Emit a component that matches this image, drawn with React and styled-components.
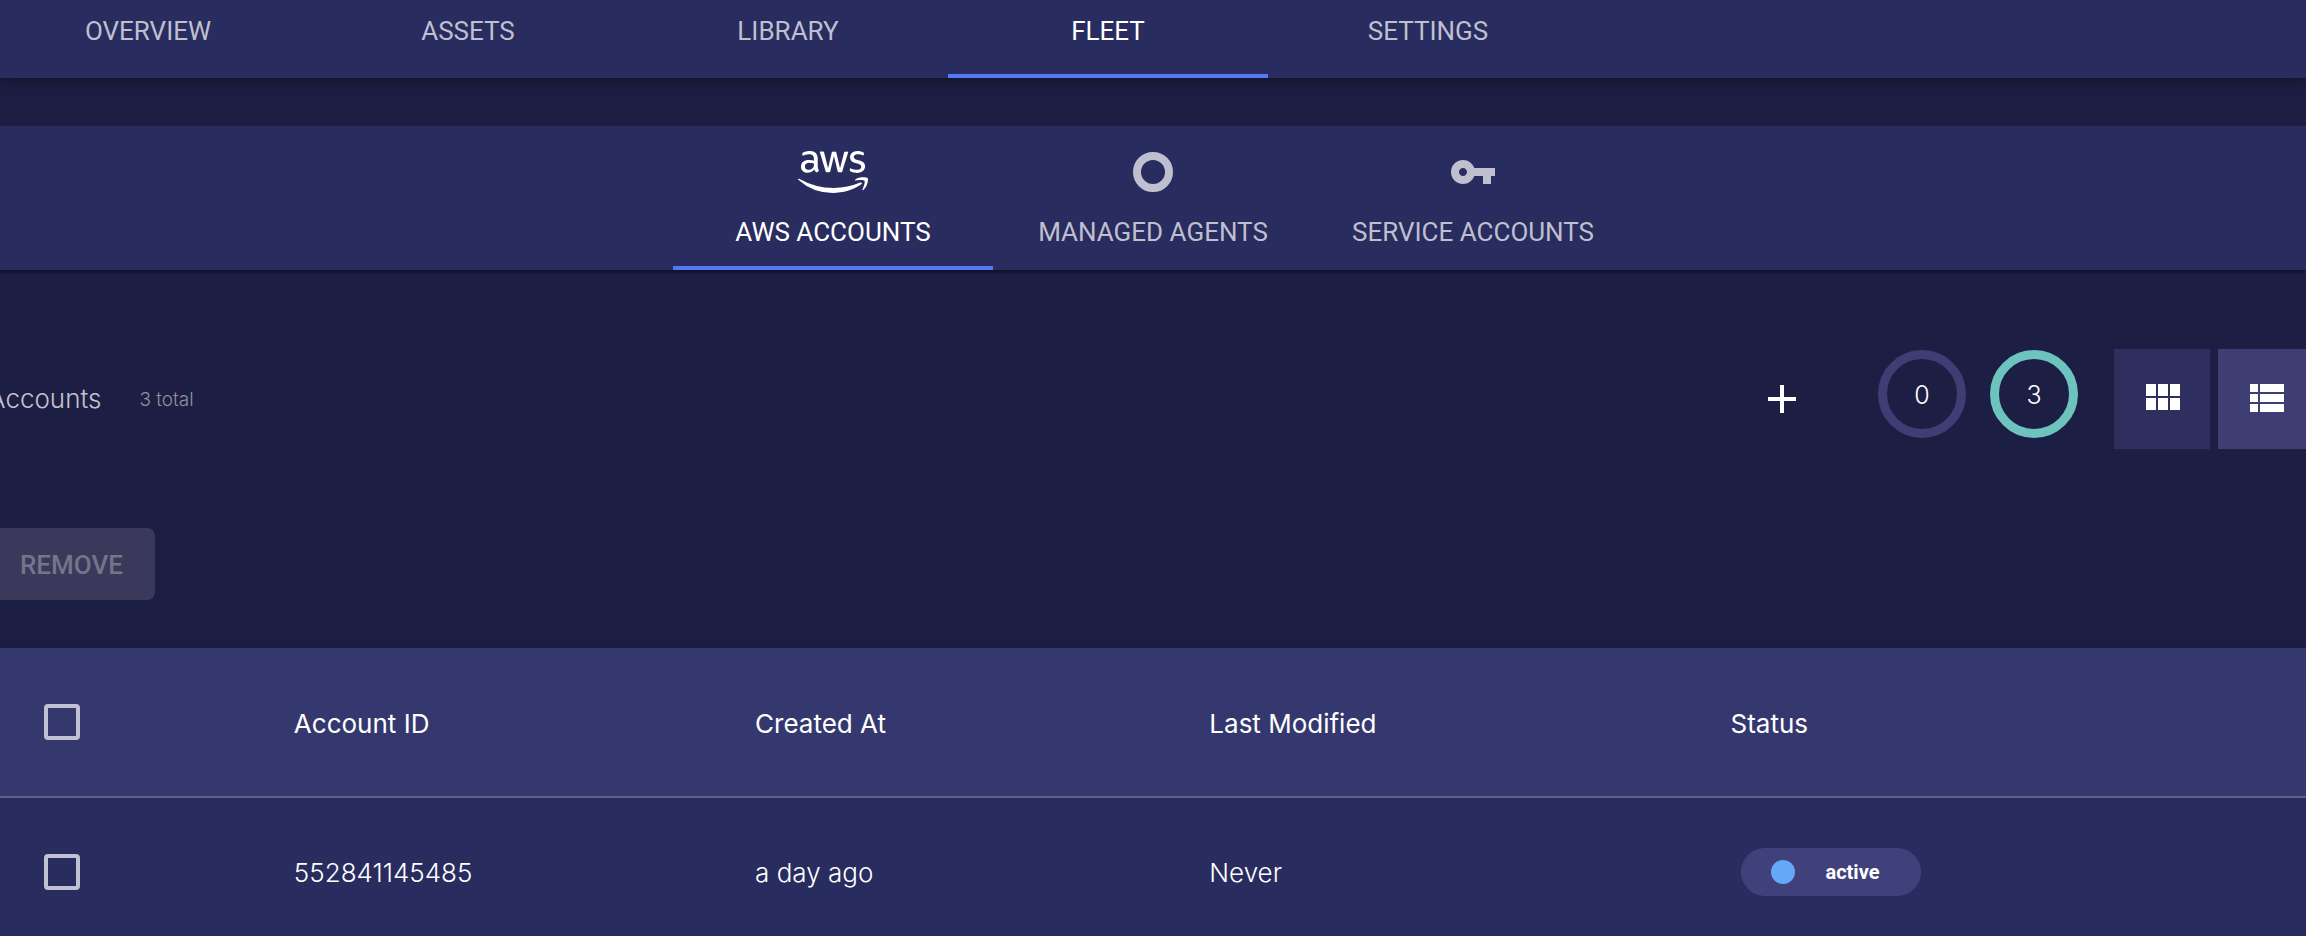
import React, { useState } from "react";
import styled, { createGlobalStyle } from "styled-components";
import { FaAws } from "react-icons/fa";

const GlobalStyle = createGlobalStyle`
  *, *::before, *::after { box-sizing: border-box; }
  body {
    margin: 0;
    background: #1d1e43;
    color: #ffffff;
    font-family: Inter, "Liberation Sans", sans-serif;
    font-size: 26px;
    line-height: 32px;
  }
  button { font: inherit; color: inherit; border: 0; cursor: pointer; }
`;

const Page = styled.div`
  height: 100vh;
  overflow: hidden;
`;

const Bar = styled.nav`
  display: flex;
  background: #292c5e;
`;

const MainNav = styled(Bar)`
  height: 78px;
  box-shadow: 0 4px 20px rgba(0, 0, 0, 0.14), 0 2px 8px rgba(0, 0, 0, 0.3);
`;

const SubNav = styled(Bar)`
  position: relative;
  justify-content: center;
  height: 144px;
  margin-top: 48px;
  box-shadow: 0 2px 4px rgba(0, 0, 0, 0.5);
`;

const TabList = styled.div`
  display: flex;
  margin-left: ${(p) => (p.$bleed ? "-12px" : "0")};
`;

const Tab = styled.a`
  display: flex;
  flex-direction: column;
  align-items: center;
  justify-content: flex-end;
  gap: 20px;
  width: 320px;
  padding-bottom: ${(p) => (p.$tall ? "18px" : "27px")};
  border-bottom: 4px solid ${(p) => (p.$active ? "#5578f5" : "transparent")};
  color: ${(p) => (p.$active ? "#ffffff" : "#bfbfcf")};
  font-family: Roboto, "Liberation Sans", sans-serif;
  line-height: 32px;
  text-decoration: none;
  white-space: nowrap;
`;

const TabIcon = styled.span`
  display: flex;
  align-items: center;
  justify-content: center;
  width: 72px;
  height: 48px;
`;

const Toolbar = styled.header`
  display: flex;
  align-items: center;
  height: 100px;
  margin: 79px -8px 0 -12px;
`;

const Title = styled.h1`
  margin: 0 38px 0 0;
  color: #c3c3cf;
  font-size: 26px;
  font-weight: 300;
`;

const Total = styled.span`
  flex: 1;
  padding-top: 2px;
  color: #8f8fa2;
  font-size: 19px;
  font-weight: 300;
`;

const IconButton = styled.button`
  display: flex;
  align-items: center;
  justify-content: center;
  width: 96px;
  height: 96px;
  margin-right: 48px;
  padding: 0;
  background: none;
`;

const Rings = styled.div`
  display: flex;
  gap: 24px;
  margin: 0 36px 10px 0;
`;

const Ring = styled.div`
  display: flex;
  align-items: center;
  justify-content: center;
  width: 88px;
  height: 88px;
  padding-top: 2px;
  border: 9px solid ${(p) => p.$color};
  border-radius: 50%;
  font-size: 25px;
  font-weight: 300;
`;

const ViewToggle = styled.div`
  display: flex;
  gap: 8px;
`;

const ViewButton = styled.button`
  display: flex;
  align-items: center;
  justify-content: center;
  width: 96px;
  height: 100px;
  padding: 0 0 2px;
  background: ${(p) => (p.$active ? "#3e3e74" : "#2f2f5f")};
`;

const Actions = styled.div`
  display: flex;
  margin: 79px 0 48px -12px;
`;

const RemoveButton = styled.button`
  height: 72px;
  padding: 2px 32px 0;
  border-radius: 0 8px 8px 0;
  background: #3a395b;
  color: #757489;
  font-family: Roboto, "Liberation Sans", sans-serif;
  font-weight: 500;

  &:disabled { cursor: default; }
`;

const Table = styled.table`
  width: 100%;
  table-layout: fixed;
  border-collapse: collapse;
  box-shadow: 0 0 8px rgba(0, 0, 0, 0.15);
`;

const Column = styled.col`
  width: ${(p) => p.$width};
`;

const HeadRow = styled.tr`
  height: 149px;
  background: #35386e;
  border-bottom: 2px solid #5f5f8a;
`;

const BodyRow = styled.tr`
  height: 149px;
  background: #292c5e;
`;

const HeadCell = styled.th`
  padding: ${(p) => (p.$control ? "0" : "3px 0 0 1px")};
  font-weight: 400;
  text-align: left;
`;

const Cell = styled.td`
  padding: ${(p) => (p.$control ? "0" : "1px 0 0 1px")};
  font-weight: 300;
`;

const Checkbox = styled.input.attrs({ type: "checkbox" })`
  appearance: none;
  display: block;
  width: 36px;
  height: 36px;
  margin: 0 0 0 44px;
  border: 4px solid #c0c1d3;
  border-radius: 4px;

  &:checked { background: #5578f5; }
`;

const Pill = styled.span`
  display: flex;
  align-items: center;
  gap: 30px;
  width: 180px;
  height: 48px;
  margin-left: 12px;
  padding-left: 30px;
  border-radius: 24px;
  background: #40417a;
  font-family: Roboto, "Liberation Sans", sans-serif;
  font-size: 20px;
  font-weight: 700;
`;

const Dot = styled.span`
  width: 24px;
  height: 24px;
  border-radius: 50%;
  background: #65a8f8;
`;

const Glyph = ({ d }) => (
  <svg width="48" height="48" viewBox="0 0 24 24" fill="currentColor" aria-hidden="true">
    <path d={d} />
  </svg>
);

const RingGlyph = () => (
  <svg width="48" height="48" viewBox="0 0 24 24" fill="none" stroke="currentColor" aria-hidden="true">
    <circle cx="12" cy="12" r="8" strokeWidth="4" />
  </svg>
);

const KEY =
  "M12.65 10C11.83 7.67 9.61 6 7 6c-3.31 0-6 2.69-6 6s2.69 6 6 6c2.61 0 4.83-1.67 5.65-4H17v4h4v-4h2v-4H12.65zM7 14c-1.1 0-2-.9-2-2s.9-2 2-2 2 .9 2 2-.9 2-2 2z";
const PLUS = "M19 13h-6v6h-2v-6H5v-2h6V5h2v6h6v2z";
const GRID =
  "M4 11h5V5H4v6zm0 7h5v-6H4v6zm6 0h5v-6h-5v6zm6 0h5v-6h-5v6zm-6-7h5V5h-5v6zm6-6v6h5V5h-5z";
const LIST =
  "M4 14h4v-4H4v4zm0 5h4v-4H4v4zM4 9h4V5H4v4zm5 5h12v-4H9v4zm0 5h12v-4H9v4zM9 5v4h12V5H9z";

const sections = ["OVERVIEW", "ASSETS", "LIBRARY", "FLEET", "SETTINGS"];
const fleetTabs = [
  { label: "AWS ACCOUNTS", icon: <FaAws size={70} aria-hidden="true" /> },
  { label: "MANAGED AGENTS", icon: <RingGlyph /> },
  { label: "SERVICE ACCOUNTS", icon: <Glyph d={KEY} /> },
];
const columns = ["Account ID", "Created At", "Last Modified", "Status"];
const accounts = [
  { id: "552841145485", created: "a day ago", modified: "Never", status: "active" },
];

export default function App() {
  const [selected, setSelected] = useState([]);
  const allSelected = selected.length === accounts.length;
  const toggle = (id) =>
    setSelected((s) => (s.includes(id) ? s.filter((x) => x !== id) : [...s, id]));

  return (
    <Page>
      <GlobalStyle />
      <MainNav aria-label="Sections">
        <TabList $bleed>
          {sections.map((label) => (
            <Tab key={label} href="#" $active={label === "FLEET"}>{label}</Tab>
          ))}
        </TabList>
      </MainNav>
      <SubNav aria-label="Fleet">
        <TabList>
          {fleetTabs.map(({ label, icon }, i) => (
            <Tab key={label} href="#" $tall $active={i === 0}>
              <TabIcon>{icon}</TabIcon>
              {label}
            </Tab>
          ))}
        </TabList>
      </SubNav>
      <main>
        <Toolbar>
          <Title>Accounts</Title>
          <Total>3 total</Total>
          <IconButton aria-label="Add account"><Glyph d={PLUS} /></IconButton>
          <Rings>
            <Ring $color="#3e3e74">0</Ring>
            <Ring $color="#6dc4be">3</Ring>
          </Rings>
          <ViewToggle>
            <ViewButton aria-label="Grid view"><Glyph d={GRID} /></ViewButton>
            <ViewButton aria-label="List view" $active><Glyph d={LIST} /></ViewButton>
          </ViewToggle>
        </Toolbar>
        <Actions>
          <RemoveButton disabled={selected.length === 0}>REMOVE</RemoveButton>
        </Actions>
        <Table>
          <colgroup>
            <Column $width="12.7%" />
            <Column $width="20%" />
            <Column $width="19.7%" />
            <Column $width="22.6%" />
            <Column $width="25%" />
          </colgroup>
          <thead>
            <HeadRow>
              <HeadCell $control>
                <Checkbox
                  aria-label="Select all accounts"
                  checked={allSelected}
                  onChange={() => setSelected(allSelected ? [] : accounts.map((a) => a.id))}
                />
              </HeadCell>
              {columns.map((label) => (
                <HeadCell key={label} scope="col">{label}</HeadCell>
              ))}
            </HeadRow>
          </thead>
          <tbody>
            {accounts.map((a) => (
              <BodyRow key={a.id}>
                <Cell $control>
                  <Checkbox
                    aria-label={`Select ${a.id}`}
                    checked={selected.includes(a.id)}
                    onChange={() => toggle(a.id)}
                  />
                </Cell>
                <Cell>{a.id}</Cell>
                <Cell>{a.created}</Cell>
                <Cell>{a.modified}</Cell>
                <Cell $control><Pill><Dot />{a.status}</Pill></Cell>
              </BodyRow>
            ))}
          </tbody>
        </Table>
      </main>
    </Page>
  );
}
